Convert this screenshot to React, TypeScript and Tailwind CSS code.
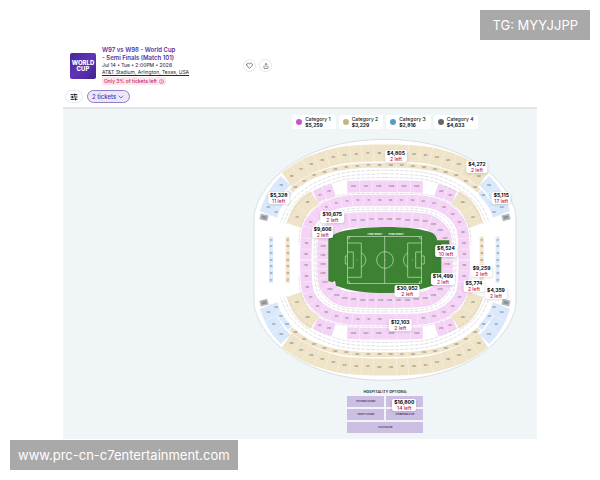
import { ChevronDown, Heart, Info, Share, SlidersHorizontal } from "lucide-react";

type Point = [number, number];

type Band = {
  points: Point[];
  cells: number;
  width: number;
  color: string;
  prefix: string;
};

const MAP_W = 810;
const MAP_H = 750;

const TAN = "#efe3c8";
const BLUE = "#d9e8fb";
const PINK = "#f4d3f6";

const categories = [
  { name: "Category 1", price: "$5,259", dot: "bg-[#c455d3]" },
  { name: "Category 2", price: "$3,229", dot: "bg-[#c9b582]" },
  { name: "Category 3", price: "$2,816", dot: "bg-[#5a9bc9]" },
  { name: "Category 4", price: "$4,633", dot: "bg-[#66696c]" },
];

const offers = [
  { price: "$4,805", left: 2, x: 437, y: 62 },
  { price: "$4,272", left: 2, x: 680, y: 95 },
  { price: "$5,328", left: 11, x: 85, y: 188 },
  { price: "$5,115", left: 17, x: 753, y: 190 },
  { price: "$10,675", left: 2, x: 246, y: 247 },
  { price: "$9,606", left: 2, x: 217, y: 290 },
  { price: "$8,524", left: 10, x: 587, y: 347 },
  { price: "$9,259", left: 2, x: 694, y: 408 },
  { price: "$14,499", left: 2, x: 578, y: 431 },
  { price: "$5,774", left: 2, x: 671, y: 453 },
  { price: "$30,952", left: 2, x: 471, y: 468 },
  { price: "$4,359", left: 2, x: 737, y: 473 },
  { price: "$12,103", left: 2, x: 450, y: 570 },
];

// every band is described for the top left quarter, then mirrored
const bands: Band[] = [
  { points: [[405, 54], [345, 55], [270, 62], [197, 83], [150, 106], [110, 134]], cells: 9, width: 51, color: TAN, prefix: "4" },
  { points: [[107, 137], [86, 160], [64, 196], [48, 236]], cells: 3, width: 40, color: BLUE, prefix: "4" },
  { points: [[405, 91], [335, 92], [257, 102], [190, 123], [155, 143], [122, 168]], cells: 9, width: 14, color: TAN, prefix: "3" },
  { points: [[120, 170], [98, 198], [82, 222], [74, 246]], cells: 3, width: 16, color: BLUE, prefix: "3" },
  { points: [[405, 154], [350, 154], [291, 156]], cells: 3, width: 35, color: PINK, prefix: "C2" },
  { points: [[251, 165], [225, 173], [196, 186]], cells: 2, width: 38, color: PINK, prefix: "2" },
  { points: [[194, 187], [165, 209], [145, 238], [132, 272]], cells: 2, width: 46, color: TAN, prefix: "2" },
  { points: [[405, 196], [300, 198], [238, 213], [193, 247], [172, 290], [167, 375]], cells: 11, width: 34, color: PINK, prefix: "1" },
  { points: [[405, 254], [310, 256], [268, 264], [235, 292], [220, 325], [219, 375]], cells: 10, width: 46, color: PINK, prefix: "C1" },
];

const suites: Point[][] = [
  [[405, 105], [290, 112], [210, 136], [150, 173], [115, 212], [92, 262]],
  [[405, 116], [290, 123], [214, 146], [157, 181], [124, 217], [101, 264]],
  [[405, 127], [290, 133], [220, 155], [165, 188], [133, 222], [110, 266]],
  [[405, 176], [300, 177], [235, 192], [178, 232], [152, 280], [147, 330]],
  [[405, 219], [305, 221], [245, 236], [206, 270], [194, 320], [192, 375]],
  [[405, 226], [305, 228], [250, 243], [213, 276], [200, 320], [198, 375]],
];

const mirrors = [
  ([x, y]: Point): Point => [x, y],
  ([x, y]: Point): Point => [MAP_W - x, y],
  ([x, y]: Point): Point => [x, MAP_H - y],
  ([x, y]: Point): Point => [MAP_W - x, MAP_H - y],
];

// seat numbers are left out where a price tag lies on them
const isCovered = (x: number, y: number) =>
  offers.some((o) => Math.abs(o.x - x) < 46 && Math.abs(o.y - y) < 26);

// Catmull-Rom samples through the control points
function sample(points: Point[], steps = 24): Point[] {
  const out: Point[] = [];
  for (let i = 0; i < points.length - 1; i++) {
    const p0 = points[Math.max(i - 1, 0)];
    const p1 = points[i];
    const p2 = points[i + 1];
    const p3 = points[Math.min(i + 2, points.length - 1)];
    for (let s = 0; s < steps; s++) {
      const t = s / steps;
      const at = (k: 0 | 1) =>
        0.5 *
        (2 * p1[k] +
          (p2[k] - p0[k]) * t +
          (2 * p0[k] - 5 * p1[k] + 4 * p2[k] - p3[k]) * t * t +
          (3 * p1[k] - p0[k] - 3 * p2[k] + p3[k]) * t * t * t);
      out.push([at(0), at(1)]);
    }
  }
  out.push(points[points.length - 1]);
  return out;
}

// splits a sampled line into pieces of equal length
function split(line: Point[], count: number): Point[][] {
  const lengths = [0];
  for (let i = 1; i < line.length; i++) {
    lengths.push(lengths[i - 1] + Math.hypot(line[i][0] - line[i - 1][0], line[i][1] - line[i - 1][1]));
  }
  const total = lengths[lengths.length - 1];
  const pointAt = (d: number): Point => {
    let i = 1;
    while (i < lengths.length - 1 && lengths[i] < d) i++;
    const t = (d - lengths[i - 1]) / (lengths[i] - lengths[i - 1]);
    return [
      line[i - 1][0] + (line[i][0] - line[i - 1][0]) * t,
      line[i - 1][1] + (line[i][1] - line[i - 1][1]) * t,
    ];
  };
  return Array.from({ length: count }, (_, c) => {
    const from = (total * c) / count;
    const to = (total * (c + 1)) / count;
    return Array.from({ length: 9 }, (_, k) => pointAt(from + ((to - from) * k) / 8));
  });
}

const toPath = (line: Point[]) => "M" + line.map(([x, y]) => `${x.toFixed(1)} ${y.toFixed(1)}`).join("L");

function SeatBand({ band }: { band: Band }) {
  const line = sample(band.points);
  const pieces = split(line, band.cells);
  return (
    <g>
      {mirrors.map((mirror, m) => (
        <path key={m} d={toPath(line.map(mirror))} fill="none" stroke={band.color} strokeWidth={band.width} />
      ))}
      {mirrors.map((mirror, m) =>
        pieces.map((piece, i) => {
          const cell = piece.map(mirror);
          const [x, y] = cell[4];
          const [ex, ey] = cell[8];
          const [px, py] = cell[7];
          const len = Math.hypot(ex - px, ey - py);
          const nx = (-(ey - py) / len) * (band.width / 2);
          const ny = ((ex - px) / len) * (band.width / 2);
          return (
            <g key={`${m}-${i}`}>
              <path d={`M${ex - nx} ${ey - ny}L${ex + nx} ${ey + ny}`} stroke="#fff" strokeWidth="1.5" opacity="0.8" />
              {!isCovered(x, y) && (
                <text x={x} y={y + 2} textAnchor="middle" fontSize="6" fontWeight="600" fill="#6b6470">
                  {band.prefix}
                  {m * 10 + i + 10}
                </text>
              )}
            </g>
          );
        }),
      )}
    </g>
  );
}

function SideColumn({ x, color }: { x: number; color: string }) {
  return (
    <g>
      {[0, 1, 2, 3, 4, 5, 6].map((i) => (
        <g key={i}>
          <rect x={x - 6} y={305 + i * 20} width="12" height="19" fill={color} />
          {!isCovered(x, 315 + i * 20) && (
            <text x={x} y={317 + i * 20} textAnchor="middle" fontSize="6" fontWeight="600" fill="#6b6470">
              {i + 31}
            </text>
          )}
        </g>
      ))}
    </g>
  );
}

function Pitch() {
  return (
    <g>
      <path
        d="M235 312Q250 296 272 290C310 281 350 277 405 276C470 276 520 282 548 294Q558 300 562 316H598V328H574V425Q570 446 545 453C500 468 460 474 405 474C350 474 300 468 258 452L255 438L247 442L235 438Z"
        fill="#3d8233"
      />
      <g fill="none" stroke="#c8e2bf" strokeWidth="2">
        <rect x="292" y="304" width="223" height="142" />
        <path d="M404 304V446" />
        <circle cx="405" cy="375" r="25" />
        <path d="M292 324H334V427H292M292 351H310V399H292M292 363H286V387H292" />
        <path d="M515 324H473V427H515M515 351H497V399H515M515 363H523V387H515" />
        <path d="M334 352Q362 375 334 398M473 352Q447 375 473 398" />
        <path d="M292 312Q300 312 300 304M507 304Q507 312 515 312M292 438Q300 438 300 446M507 446Q507 438 515 438" />
      </g>
      <g fill="#c8e2bf">
        <circle cx="321" cy="375" r="1.5" />
        <circle cx="487" cy="375" r="1.5" />
        <circle cx="405" cy="375" r="1.5" />
      </g>
      <g fill="#fff" fontSize="6" fontWeight="700" textAnchor="middle">
        <text x="374" y="299">TEAM 1 BENCH</text>
        <text x="437" y="299">TEAM 2 BENCH</text>
      </g>
    </g>
  );
}

function StadiumMap() {
  return (
    <svg viewBox="0 0 810 750" className="block w-full" role="img" aria-label="Stadium seating map">
      <path
        d="M12 246Q12 228 28 192C78 96 205 13 405 13S732 96 782 192Q798 228 798 246V504Q798 522 782 558C732 654 605 736 405 736S78 654 28 558Q12 522 12 504Z"
        fill="#fff"
        stroke="#d3d8dc"
        strokeWidth="2.5"
      />
      {bands.map((band, i) => (
        <SeatBand key={i} band={band} />
      ))}
      <g fill="none" stroke="#cbc7d0" strokeWidth="1.8" strokeDasharray="11 4">
        {suites.map((points, i) =>
          mirrors.map((mirror, m) => {
            const d = toPath(sample(points).map(mirror));
            return (
              <g key={`${i}-${m}`}>
                {i > 3 && <path d={d} stroke="#fff" strokeWidth="7" strokeDasharray="none" />}
                <path d={d} />
              </g>
            );
          }),
        )}
      </g>
      <SideColumn x={63} color={BLUE} />
      <SideColumn x={113} color={TAN} />
      <SideColumn x={695} color={TAN} />
      <SideColumn x={743} color={BLUE} />
      {mirrors.map((mirror, m) => {
        const [x, y] = mirror([42, 247]);
        return (
          <g key={m} transform={`rotate(${m === 0 || m === 3 ? 14 : -14} ${x} ${y})`}>
            <rect x={x - 12} y={y - 9} width="24" height="18" fill="#b3b7ba" />
            <rect x={x - 7} y={y - 4} width="14" height="8" fill="#8d9194" />
          </g>
        );
      })}
      <Pitch />
    </svg>
  );
}

function PriceTag({ price, left }: { price: string; left: number }) {
  return (
    <button className="block rounded-xs bg-white px-0.5 text-center text-[5px] leading-[6px] whitespace-nowrap shadow-sm">
      <span className="block font-bold text-gray-950">{price}</span>
      <span className="block font-medium text-[#bd1e51]">{left} left</span>
    </button>
  );
}

function EventHeader() {
  return (
    <header className="border-b-2 border-[#e3e6e9] px-0.5 pb-1">
      <div className="flex items-start gap-1.5 pl-[5px]">
        <div className="mt-[7px] grid size-[26px] shrink-0 place-items-center rounded-xs bg-linear-to-br from-[#4b259c] via-[#5f35b5] to-[#43208f] text-center text-[6px] leading-[6px] font-extrabold text-white">
          <span>
            WORLD
            <br />
            CUP
          </span>
        </div>
        <div className="w-[135px]">
          <h1 className="text-[6px] leading-2 font-semibold text-[#4f35a0]">
            W97 vs W98 - World Cup
            <br />- Semi Finals (Match 101)
          </h1>
          <p className="text-[5px] leading-[7px] font-medium text-gray-700">Jul 14 • Tue • 2:00PM • 2026</p>
          <a href="#venue" className="block text-[5px] leading-[6px] text-gray-800 underline">
            AT&amp;T Stadium, Arlington, Texas, USA
          </a>
          <p className="mt-0.5 flex w-fit items-center gap-0.5 rounded-xs bg-[#fde3ea] px-0.5 text-[5px] leading-2 font-medium text-[#c42e63]">
            Only 3% of tickets left <Info className="size-[5px]" />
          </p>
        </div>
        <div className="mt-[13px] flex gap-[3px]">
          <button aria-label="Save event" className="grid size-[13px] place-items-center rounded-full border border-gray-200 bg-white text-gray-800">
            <Heart className="size-[7px]" />
          </button>
          <button aria-label="Share event" className="grid size-[13px] place-items-center rounded-full border border-gray-200 bg-white text-gray-800">
            <Share className="size-1.5" />
          </button>
        </div>
      </div>
      <div className="mt-[5px] flex gap-1">
        <button aria-label="Filters" className="grid h-[13px] w-[18px] place-items-center rounded-full border border-gray-200 bg-white text-gray-900">
          <SlidersHorizontal className="size-2" strokeWidth={3} />
        </button>
        <button className="flex h-[13px] items-center gap-px rounded-full border border-[#8f7fc4] bg-[#ece6fa] px-1 text-[6px] leading-none font-medium text-[#4f35a0]">
          2 tickets <ChevronDown className="size-2" />
        </button>
      </div>
    </header>
  );
}

function Hospitality() {
  return (
    <section className="mt-1 flex w-1/4 flex-col items-center">
      <h2 className="font-['Roboto',sans-serif] text-[4px] leading-[6px] font-medium whitespace-nowrap text-gray-900">
        HOSPITALITY OPTIONS:
      </h2>
      <div className="relative mt-px grid w-full grid-cols-2 gap-0.5 text-center text-[2px] leading-[11px] font-bold text-[#3d2d63]">
        <div className="bg-[#cdbfe3]">PITCHSIDE LOUNGE</div>
        <div className="bg-[#cdbfe3]" />
        <div className="bg-[#cdbfe3]">TROPHY LOUNGE</div>
        <div className="bg-[#cdbfe3]">CHAMPIONS CLUB</div>
        <div className="col-span-2 bg-[#cdbfe3]">FIFA PAVILION</div>
        <div className="absolute top-1/4 left-3/4 -translate-x-1/2 -translate-y-1/2">
          <PriceTag price="$16,800" left={14} />
        </div>
      </div>
    </section>
  );
}

export default function App() {
  return (
    <div className="relative min-h-screen bg-white pt-[46px] pb-10 font-['Inter',sans-serif]">
      <main className="mx-auto w-[79%]">
        <EventHeader />
        <div className="flex justify-end bg-[#f0f6f7] pt-1.5 pb-1.5">
          <div className="flex w-[64%] flex-col items-center">
            <ul className="flex gap-[3px]">
              {categories.map((c) => (
                <li key={c.name} className="flex items-center gap-[3px] rounded-xs bg-white py-px pr-[5px] pl-1 text-[5px] leading-[6px] text-gray-900">
                  <span className={`size-1.5 rounded-full ${c.dot}`} />
                  <span>
                    <span className="block font-medium">{c.name}</span>
                    <span className="block font-bold">{c.price}</span>
                  </span>
                </li>
              ))}
            </ul>
            <div className="relative mt-1.5 w-[89%]">
              <StadiumMap />
              {offers.map((o) => (
                <div
                  key={o.price}
                  className="absolute -translate-x-1/2 -translate-y-1/2"
                  style={{ left: `${(o.x / MAP_W) * 100}%`, top: `${(o.y / MAP_H) * 100}%` }}
                >
                  <PriceTag price={o.price} left={o.left} />
                </div>
              ))}
            </div>
            <Hospitality />
          </div>
        </div>
      </main>
      <p className="absolute top-2.5 right-2.5 bg-[#a9a9a9] px-3 text-[13px] leading-[30px] text-white">TG: MYYJJPP</p>
      <p className="absolute bottom-2.5 left-2.5 bg-[#a9a9a9] px-2 text-[13px] leading-[30px] text-white">
        www.prc-cn-c7entertainment.com
      </p>
    </div>
  );
}
